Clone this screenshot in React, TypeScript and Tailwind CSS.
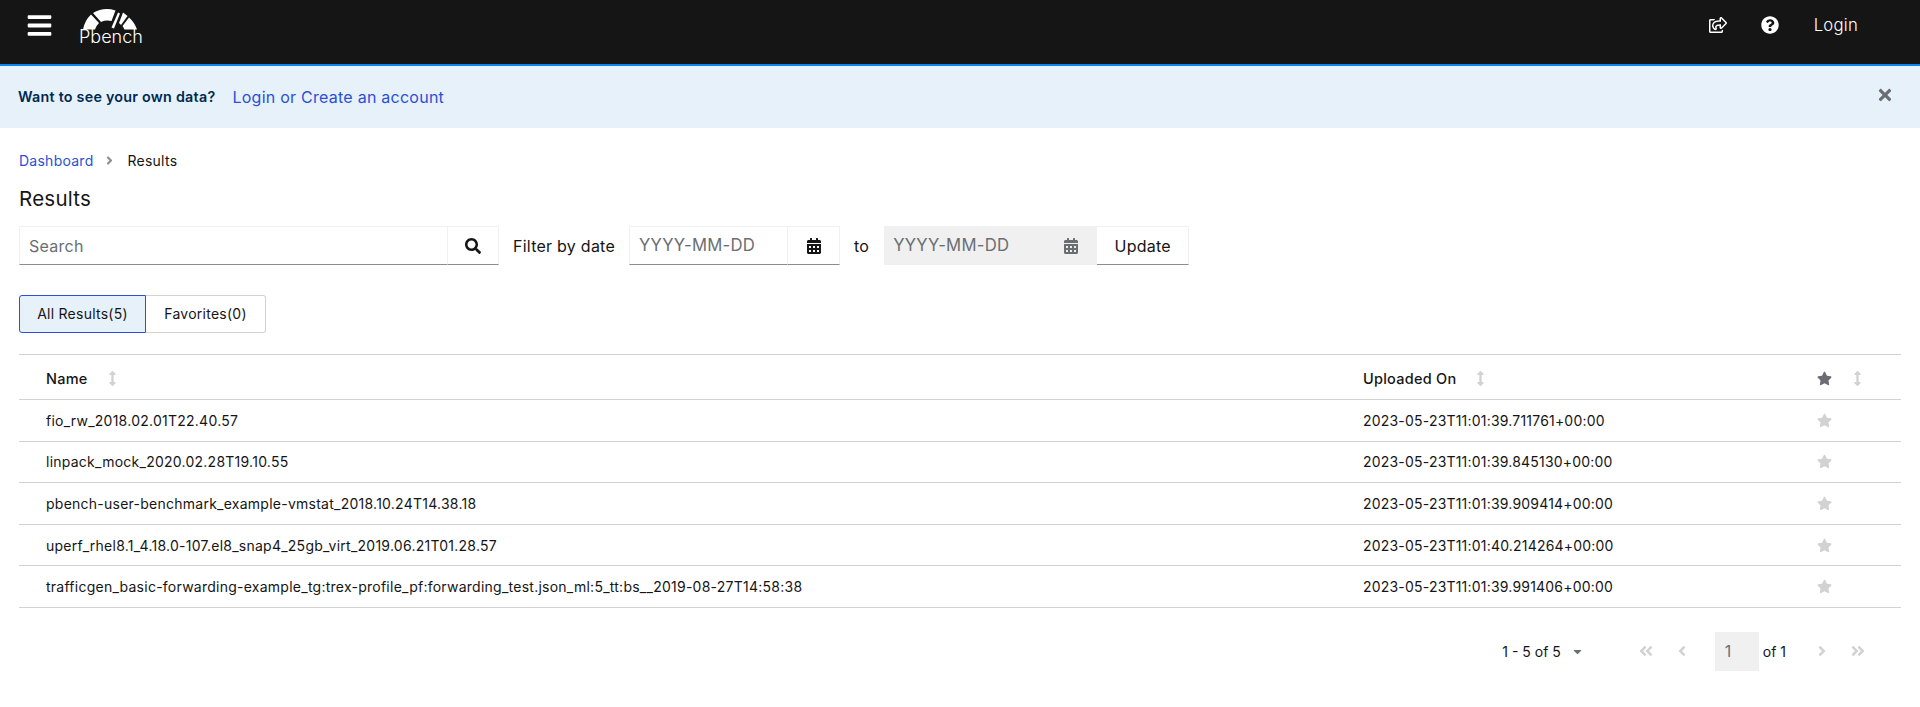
import { FaBars, FaRegShareSquare, FaQuestionCircle, FaTimes, FaAngleRight, FaAngleLeft, FaAngleDoubleLeft, FaAngleDoubleRight, FaSearch, FaCalendarAlt, FaArrowsAltV, FaStar, FaCaretDown } from 'react-icons/fa';

const rows = [
  ['fio_rw_2018.02.01T22.40.57', '2023-05-23T11:01:39.711761+00:00'],
  ['linpack_mock_2020.02.28T19.10.55', '2023-05-23T11:01:39.845130+00:00'],
  ['pbench-user-benchmark_example-vmstat_2018.10.24T14.38.18', '2023-05-23T11:01:39.909414+00:00'],
  ['uperf_rhel8.1_4.18.0-107.el8_snap4_25gb_virt_2019.06.21T01.28.57', '2023-05-23T11:01:40.214264+00:00'],
  ['trafficgen_basic-forwarding-example_tg:trex-profile_pf:forwarding_test.json_ml:5_tt:bs__2019-08-27T14:58:38', '2023-05-23T11:01:39.991406+00:00'],
];

function Logo() {
  return (
    <div className="relative w-[64px] h-[48px] ml-[25px]">
      <svg width="64" height="30" viewBox="0 0 64 30" className="mt-[5px]">
        <path d="M5 24.5 A27.5 27.5 0 0 1 13 9.5 L21 18 A15 15 0 0 0 17 24.5 Z" fill="#fff" />
        <path d="M15 8 A27.5 27.5 0 0 1 37.5 5.5 L33.5 16 A16 16 0 0 0 23 17 Z" fill="#fff" />
        <path d="M45 7.5 A27.5 27.5 0 0 1 49.5 11 L43 20 A15 15 0 0 0 41 18 Z" fill="#fff" />
        <path d="M51 12.5 A27.5 27.5 0 0 1 59 24.5 L46.5 24.5 A15 15 0 0 0 44.5 21 Z" fill="#fff" />
        <path d="M40 7.5 L42 8.5 L36 23.5 L33.5 22.5 Z" fill="#fff" />
      </svg>
      <span className="absolute left-[1px] top-[27px] text-[18px] leading-[20px] tracking-normal text-white font-light">Pbench</span>
    </div>
  );
}

function SortIcon() {
  return <FaArrowsAltV className="text-[#d2d2d2] text-[15px]" />;
}

function DateField({ disabled }: { disabled?: boolean }) {
  return (
    <div className={`flex h-full ${disabled ? 'bg-[#f0f0f0] w-[213px]' : 'w-[211px]'}`}>
      <div className={`flex-1 flex items-center pl-[9px] text-[16.7px] text-[#6a6e73] ${disabled ? '' : 'border border-[#f0f0f0] border-b-[#8a8d90]'}`}>YYYY-MM-DD</div>
      <div className={`w-[52px] flex items-center justify-center ${disabled ? 'text-[#6a6e73]' : 'border border-l-0 border-[#f0f0f0] border-b-[#8a8d90] text-[#151515]'}`}>
        <FaCalendarAlt className="text-[16px]" />
      </div>
    </div>
  );
}

export default function App() {
  return (
    <div className="min-h-[707px] bg-white text-[#151515] tracking-[0.25px]" style={{ fontFamily: 'Inter, sans-serif' }}>
      <header className="h-[66px] bg-[#151515] border-b-2 border-[#0a84ee] flex items-start text-white">
        <FaBars className="ml-[26px] mt-[12px] text-[27px]" />
        <Logo />
        <div className="ml-auto flex items-center h-[50px] pr-[62px]">
          <FaRegShareSquare className="text-[18px]" />
          <FaQuestionCircle className="ml-[34px] text-[18px]" />
          <span className="ml-[35px] pt-[2px] text-[16.7px] font-light">Login</span>
        </div>
      </header>

      <div className="h-[62px] bg-[#e7f1fa] flex items-center pl-[18px] pr-[26px]">
        <span className="text-[14.3px] font-semibold text-[#002952]">Want to see your own data?</span>
        <a className="ml-[17px] text-[16px] text-[#2b4fd6]">Login or Create an account</a>
        <FaTimes className="ml-auto mb-[4px] text-[18px] text-[#6a6e73]" />
      </div>

      <div className="px-[19px]">
        <nav className="flex items-center mt-[22px] h-[20px] text-[14px]">
          <a className="text-[#2b4fd6]">Dashboard</a>
          <FaAngleRight className="ml-[10px] mr-[11px] text-[#8a8d90] text-[13px]" />
          <span>Results</span>
        </nav>
        <h1 className="mt-[15px] text-[20.5px] leading-[28px] font-normal">Results</h1>

        <div className="flex items-center mt-[13px] h-[39px]">
          <div className="w-[429px] h-full flex items-center pl-[9px] text-[16px] text-[#6a6e73] border border-[#f0f0f0] border-b-[#8a8d90]">Search</div>
          <div className="w-[51px] h-full flex items-center justify-center border border-l-0 border-[#f0f0f0] border-b-[#8a8d90]">
            <FaSearch className="text-[16px]" />
          </div>
          <span className="mx-[14px] text-[16px]">Filter by date</span>
          <DateField />
          <span className="ml-[14px] mr-[15px] text-[16px]">to</span>
          <DateField disabled />
          <button className="w-[92px] h-full text-[16px] border border-l-0 border-[#f0f0f0] border-b-[#8a8d90]">Update</button>
        </div>

        <div className="flex mt-[30px] h-[38px] text-[14px]">
          <div className="w-[127px] pb-[1px] flex items-center justify-center bg-[#e7f1fa] border border-[#2b4fd6] rounded-l-[3px]">All Results(5)</div>
          <div className="w-[120px] pb-[1px] flex items-center justify-center border border-l-0 border-[#d2d2d2] rounded-r-[3px]">Favorites(0)</div>
        </div>

        <table className="w-full mt-[21px] border-t border-[#d2d2d2] text-[14px] table-fixed">
          <thead>
            <tr className="h-[45px] border-b border-[#d2d2d2]">
              <th className="w-[1317px] pl-[27px] pt-[3px] text-left font-medium text-[14.5px]">
                <span className="flex items-center gap-[17px]">Name <SortIcon /></span>
              </th>
              <th className="w-[462px] pl-[27px] pt-[3px] text-left font-medium text-[14.5px]">
                <span className="flex items-center gap-[17px]">Uploaded On <SortIcon /></span>
              </th>
              <th className="text-left pl-[19px] pt-[2px]">
                <span className="flex items-center gap-[18px]"><FaStar className="text-[#6a6e73] text-[15px]" /><SortIcon /></span>
              </th>
            </tr>
          </thead>
          <tbody>
            {rows.map(([name, date]) => (
              <tr key={name} className="h-[41.6px] border-b border-[#d2d2d2]">
                <td className="pl-[27px]">{name}</td>
                <td className="pl-[27px] tracking-[0.2px]">{date}</td>
                <td className="pl-[19px]"><FaStar className="text-[#d2d2d2] text-[15px]" /></td>
              </tr>
            ))}
          </tbody>
        </table>

        <div className="flex items-center justify-end mt-[24px] h-[39px] pr-[35px] text-[14px]">
          <span className="tracking-normal">1 - 5 of 5</span>
          <FaCaretDown className="ml-[10px] text-[#6a6e73] text-[13px]" />
          <FaAngleDoubleLeft className="ml-[54px] text-[#d2d2d2] text-[16px]" />
          <FaAngleLeft className="ml-[20px] text-[#d2d2d2] text-[16px]" />
          <div className="ml-[25px] w-[44px] h-[39px] bg-[#f0f0f0] flex items-center pl-[10px] text-[16px] text-[#6a6e73]">1</div>
          <span className="ml-[4px] tracking-normal">of 1</span>
          <FaAngleRight className="ml-[28px] text-[#d2d2d2] text-[16px]" />
          <FaAngleDoubleRight className="ml-[20px] text-[#d2d2d2] text-[16px]" />
        </div>
      </div>
    </div>
  );
}
